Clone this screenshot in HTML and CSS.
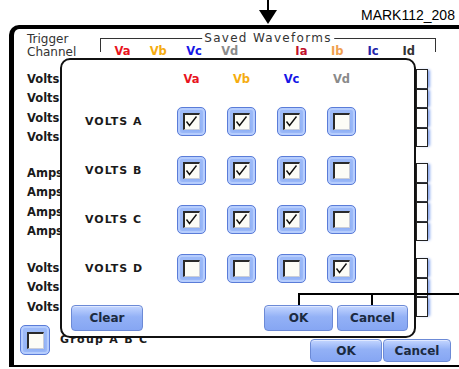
FILE: index.html
```html
<!DOCTYPE html>
<html lang="en">
<head>
  <meta charset="UTF-8">
  <title>Saved Waveforms - Trigger Channel</title>
  <link rel="stylesheet" href="styles.css">
</head>
<body>
  <div class="page">
    <div class="annot">
      <svg class="arrow" width="18" height="25" viewBox="0 0 18 25">
        <line x1="9" y1="0" x2="9" y2="12" stroke="#000" stroke-width="2"></line>
        <polygon points="0,10 18,10 9,24" fill="#000"></polygon>
      </svg>
      <span class="fig-label">MARK112_208</span>
    </div>

    <div class="screen">
      <div class="scr-head">
        <div class="trigger">Trigger<br>Channel</div>
        <div class="saved">
          <span class="legend">Saved Waveforms</span>
          <div class="saved-cols">
            <span class="c-va">Va</span>
            <span class="c-vb">Vb</span>
            <span class="c-vc">Vc</span>
            <span class="c-vd">Vd</span>
            <span></span>
            <span class="c-ia">Ia</span>
            <span class="c-ib">Ib</span>
            <span class="c-ic">Ic</span>
            <span class="c-id">Id</span>
          </div>
        </div>
      </div>

      <div class="group g1">
        <div class="row"><span class="row-label">Volts</span><span class="cell"></span></div>
        <div class="row"><span class="row-label">Volts</span><span class="cell"></span></div>
        <div class="row"><span class="row-label">Volts</span><span class="cell"></span></div>
        <div class="row"><span class="row-label">Volts</span><span class="cell"></span></div>
      </div>
      <div class="group g2">
        <div class="row"><span class="row-label">Amps</span><span class="cell"></span></div>
        <div class="row"><span class="row-label">Amps</span><span class="cell"></span></div>
        <div class="row"><span class="row-label">Amps</span><span class="cell"></span></div>
        <div class="row"><span class="row-label">Amps</span><span class="cell"></span></div>
      </div>
      <div class="group g3">
        <div class="row"><span class="row-label">Volts</span><span class="cell"></span></div>
        <div class="row"><span class="row-label">Volts</span><span class="cell"></span></div>
        <div class="row"><span class="row-label">Volts</span><span class="cell"></span></div>
      </div>

      <div class="scr-foot">
        <span class="cb"><span class="cb-box"></span></span>
        <span class="group-label">Group A B C</span>
        <div class="btns">
          <button class="btn btn-ok">OK</button>
          <button class="btn btn-cancel">Cancel</button>
        </div>
      </div>
    </div>

    <!-- dialog over the screen -->
    <div class="modal">
      <div class="grid">
        <span></span>
        <span class="hd c-va">Va</span>
        <span class="hd c-vb">Vb</span>
        <span class="hd c-vc">Vc</span>
        <span class="hd c-vd">Vd</span>

        <span class="lbl">VOLTS A</span>
        <span class="cb on"><span class="cb-box"></span></span>
        <span class="cb on"><span class="cb-box"></span></span>
        <span class="cb on"><span class="cb-box"></span></span>
        <span class="cb"><span class="cb-box"></span></span>

        <span class="lbl">VOLTS B</span>
        <span class="cb on"><span class="cb-box"></span></span>
        <span class="cb on"><span class="cb-box"></span></span>
        <span class="cb on"><span class="cb-box"></span></span>
        <span class="cb"><span class="cb-box"></span></span>

        <span class="lbl">VOLTS C</span>
        <span class="cb on"><span class="cb-box"></span></span>
        <span class="cb on"><span class="cb-box"></span></span>
        <span class="cb on"><span class="cb-box"></span></span>
        <span class="cb"><span class="cb-box"></span></span>

        <span class="lbl">VOLTS D</span>
        <span class="cb"><span class="cb-box"></span></span>
        <span class="cb"><span class="cb-box"></span></span>
        <span class="cb"><span class="cb-box"></span></span>
        <span class="cb on"><span class="cb-box"></span></span>
      </div>
      <div class="modal-foot">
        <button class="btn btn-clear">Clear</button>
        <button class="btn btn-mok">OK</button>
        <button class="btn btn-mcancel">Cancel</button>
      </div>
    </div>

    <!-- callout lines pointing at OK / Cancel -->
    <div class="callout">
      <span class="tick tick-ok"></span>
      <span class="tick tick-cancel"></span>
    </div>
  </div>

  <script>
    // draw the check marks into the checked boxes
    document.querySelectorAll('.cb.on .cb-box').forEach(box => {
      box.innerHTML = '<svg width="15" height="15" viewBox="0 0 15 15"><path d="M2.5 7.5 L5.5 11.5 L12.5 2.5" fill="none" stroke="#111" stroke-width="1.4"/></svg>';
    });
  </script>
</body>
</html>
```

FILE: styles.css
```css
:root {
  --ink: #111;
  --btn-text: #1b2a40;
  --blue-edge: #5a7cd8;
  --blue: #8fb0f6;
  --blue-light: #c6d8ff;
}

body {
  margin: 0;
  background: #fff;
  font-family: 'DejaVu Sans', Verdana, sans-serif;
  color: var(--ink);
}

.page {
  position: relative;
  width: 459px;
  height: 369px;
  overflow: hidden;
}

.annot {
  display: flex;
  align-items: flex-start;
  height: 25px;
}

.arrow {
  margin-left: 259px;
  display: block;
}

.fig-label {
  margin-left: 84px;
  margin-top: 7px;
  font-family: 'Liberation Sans', Arial, sans-serif;
  font-size: 14px;
  line-height: 16px;
  white-space: nowrap;
  color: #000;
}

/* underlying screen */
.screen {
  margin-left: 9px;
  width: 490px;
  height: 336px;
  border-top: 4px solid #000;
  border-left: 5px solid #000;
  border-bottom: 2px solid #000;
  border-top-left-radius: 10px;
}

.scr-head {
  display: flex;
  height: 40px;
}

.trigger {
  padding: 4px 0 0 13px;
  width: 73px;
  font-size: 12px;
  line-height: 12.5px;
  color: #333;
}

.saved {
  position: relative;
  margin-top: 9px;
  width: 334px;
  height: 13px;
  border: 1.5px solid #333;
  border-bottom: none;
}

.legend {
  position: absolute;
  left: 50%;
  top: -8px;
  transform: translateX(-50%);
  background: #fff;
  padding: 0 2px;
  font-size: 12px;
  line-height: 14px;
  letter-spacing: 1.3px;
  color: #333;
  white-space: nowrap;
}

.saved-cols {
  display: grid;
  grid-template-columns: repeat(9, 35.8px);
  padding: 6px 0 0 3.5px;
  font-size: 11.5px;
  font-weight: bold;
  line-height: 12px;
  text-align: center;
}

.c-va { color: #e8141e; }
.c-vb { color: #f5ac10; }
.c-vc { color: #1616e6; }
.c-vd { color: #8a8a8a; }
.c-ia { color: #c0102c; }
.c-ib { color: #f0a050; }
.c-ic { color: #2424a8; }
.c-id { color: #333; }

.group {
  display: flex;
  flex-direction: column;
  width: 414px;
}

.g2 { margin-top: 16px; }
.g3 { margin-top: 17px; }

.row {
  display: flex;
  justify-content: space-between;
  align-items: center;
  height: 19.5px;
}

.row-label {
  padding-left: 13px;
  font-size: 11.5px;
  font-weight: bold;
  color: #1a1a1a;
}

.cell {
  width: 12px;
  height: 100%;
  box-sizing: border-box;
  border: 1.5px solid #222;
  border-top-width: 0.75px;
  border-bottom-width: 0.75px;
  box-shadow: 3px 0 3px -1px #87a6ee;
}

.scr-foot {
  display: flex;
  align-items: flex-start;
  margin-top: 8.5px;
  padding-left: 6px;
}

.group-label {
  width: 240px;
  margin: 9px 0 0 10px;
  font-size: 11px;
  font-weight: bold;
  letter-spacing: 1.3px;
  line-height: 12px;
  color: #1a1a1a;
}

.btns {
  display: flex;
  gap: 1px;
  margin: 14px 0 0 10px;
}

/* checkboxes */
.cb {
  display: flex;
  align-items: center;
  justify-content: center;
  width: 29px;
  height: 29px;
  box-sizing: border-box;
  border: 1px solid var(--blue-edge);
  border-radius: 5px;
  background: linear-gradient(160deg, #a8c4fb, #7fa3f2);
  box-shadow: inset 0 0 0 2px #b6cdfd, inset 0 0 3px 4px #9dbaf8;
}

.scr-foot .cb {
  width: 30px;
  height: 30px;
}

.cb-box {
  display: block;
  width: 17px;
  height: 17px;
  box-sizing: border-box;
  background: #fcfcf6;
  border-top: 2px solid #2a2a2a;
  border-left: 2px solid #2a2a2a;
  border-right: 1px solid #c9cdd8;
  border-bottom: 1px solid #c9cdd8;
}

.cb-box svg {
  display: block;
  margin: -1px 0 0 -1px;
}

/* buttons */
.btn {
  height: 23px;
  padding: 0;
  border: 1px solid #6c8ad6;
  border-radius: 4px;
  background: linear-gradient(#c4d6ff, #93b1f6 45%, #86a6f3);
  box-shadow: inset 0 1px 0 #dfe8ff;
  font-family: 'DejaVu Sans', Verdana, sans-serif;
  font-size: 12px;
  font-weight: bold;
  color: var(--btn-text);
}

.btn-ok { width: 72px; }
.btn-cancel { width: 68px; }

/* dialog */
.modal {
  position: absolute;
  left: 60px;
  top: 58px;
  width: 356px;
  height: 280px;
  box-sizing: border-box;
  padding: 10px 6px 0 23px;
  border: 2px solid #111;
  border-radius: 10px;
  background: #fff;
}

.grid {
  display: grid;
  grid-template-columns: 71px repeat(4, 29px);
  grid-template-rows: 17px repeat(4, 29px);
  column-gap: 21px;
  row-gap: 20px;
  align-items: center;
}

.hd {
  text-align: center;
  font-size: 11.5px;
  font-weight: bold;
}

.lbl {
  font-size: 11px;
  font-weight: bold;
  letter-spacing: 1px;
  color: #1a1a1a;
  white-space: nowrap;
}

.modal-foot {
  display: flex;
  gap: 4px;
  margin: 22px 0 0 -14px;
}

.modal-foot .btn {
  height: 26px;
}

.btn-clear { width: 72px; margin-right: auto; }
.btn-mok { width: 69px; }
.btn-mcancel { width: 71px; }

/* annotation lines */
.callout {
  position: absolute;
  left: 298px;
  top: 293px;
  width: 161px;
  height: 12px;
  border-top: 2px solid #000;
  box-sizing: border-box;
}

.tick {
  position: absolute;
  top: 0;
  width: 2px;
  height: 10px;
  background: #000;
}

.tick-ok { left: 0; }
.tick-cancel { left: 73px; }
```
